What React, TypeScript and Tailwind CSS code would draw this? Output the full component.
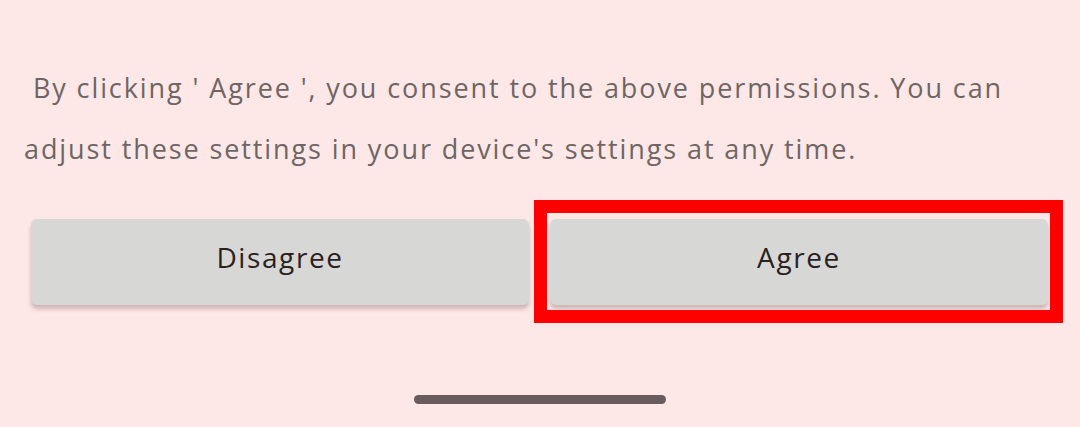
import React from "react";

const Consent: React.FC = () => {
  return (
    <div className="w-[1080px] h-[427px] bg-[#fde8e7] flex flex-col overflow-hidden" style={{ fontFamily: '"Open Sans", sans-serif' }}>
      <p className="mt-[57px] pl-[24px] pr-[30px] text-[27px] leading-[61px] text-[#6f6565] tracking-[1.9px]">
        &nbsp;By clicking ' Agree ', you consent to the above permissions. You can adjust these settings in your device's settings at any time.
      </p>

      <div className="mt-[40px] pl-[31px] pr-[32px] grid grid-cols-2 gap-[21px]">
        <button className="h-[86px] pb-[10px] rounded-[6px] bg-[#d7d8d6] shadow-[0_4px_4px_rgba(120,90,90,0.35)] text-[28px] text-[#2a2121] tracking-[1.6px]">
          Disagree
        </button>
        <div className="relative">
          <button className="w-full h-[86px] pb-[10px] rounded-[6px] bg-[#d7d8d6] shadow-[0_4px_4px_rgba(120,90,90,0.35)] text-[28px] text-[#2a2121] tracking-[1.6px]">
            Agree
          </button>
          {/* highlight frame */}
          <div className="absolute left-[-16px] right-[-15px] top-[-19px] bottom-[-18px] border-[13px] border-[#ff0000] pointer-events-none" />
        </div>
      </div>

      <div className="mt-auto mb-[23px] mx-auto w-[252px] h-[9px] rounded-full bg-[#6a5c5c]" />
    </div>
  );
};

export default function App() {
  return <Consent />;
}
